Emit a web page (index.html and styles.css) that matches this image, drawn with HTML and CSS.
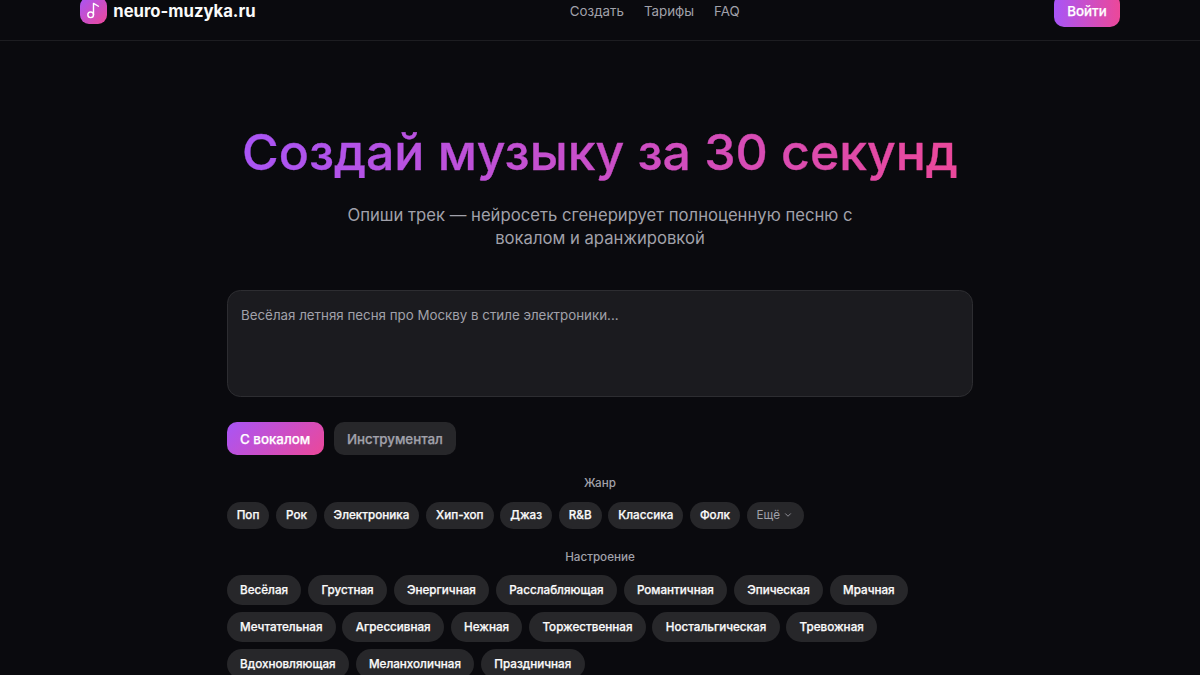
FILE: index.html
```html
<!DOCTYPE html>
<html lang="ru">
<head>
    <meta charset="UTF-8">
    <meta name="viewport" content="width=device-width, initial-scale=1.0">
    <title>neuro-muzyka.ru</title>
    <link rel="stylesheet" href="styles.css">
</head>
<body>
    <header class="header">
        <div class="header-inner">
            <a href="#" class="logo">
                <span class="logo-icon">
                    <svg viewBox="0 0 24 24" width="17" height="17" fill="none" stroke="#fff" stroke-width="2" stroke-linecap="round" stroke-linejoin="round">
                        <circle cx="8" cy="18" r="4"/>
                        <path d="M12 18V2l7 4"/>
                    </svg>
                </span>
                <span class="logo-text">neuro-muzyka.ru</span>
            </a>
            <nav class="nav">
                <a href="#">Создать</a>
                <a href="#">Тарифы</a>
                <a href="#">FAQ</a>
            </nav>
            <button class="login">Войти</button>
        </div>
    </header>

    <main class="main">
        <h1 class="title">Создай музыку за 30 секунд</h1>
        <p class="subtitle">Опиши трек — нейросеть сгенерирует полноценную песню с вокалом и аранжировкой</p>

        <textarea class="prompt" placeholder="Весёлая летняя песня про Москву в стиле электроники..."></textarea>

        <div class="modes">
            <button class="mode active">С вокалом</button>
            <button class="mode">Инструментал</button>
        </div>

        <div class="label">Жанр</div>
        <div class="chips genres">
            <button class="chip">Поп</button>
            <button class="chip">Рок</button>
            <button class="chip">Электроника</button>
            <button class="chip">Хип-хоп</button>
            <button class="chip">Джаз</button>
            <button class="chip">R&amp;B</button>
            <button class="chip">Классика</button>
            <button class="chip">Фолк</button>
            <button class="chip more">Ещё
                <svg viewBox="0 0 24 24" width="10" height="10" fill="none" stroke="currentColor" stroke-width="2" stroke-linecap="round" stroke-linejoin="round">
                    <path d="m6 9 6 6 6-6"/>
                </svg>
            </button>
        </div>

        <div class="label">Настроение</div>
        <div class="chips moods">
            <button class="chip">Весёлая</button>
            <button class="chip">Грустная</button>
            <button class="chip">Энергичная</button>
            <button class="chip">Расслабляющая</button>
            <button class="chip">Романтичная</button>
            <button class="chip">Эпическая</button>
            <button class="chip">Мрачная</button>
            <button class="chip">Мечтательная</button>
            <button class="chip">Агрессивная</button>
            <button class="chip">Нежная</button>
            <button class="chip">Торжественная</button>
            <button class="chip">Ностальгическая</button>
            <button class="chip">Тревожная</button>
            <button class="chip">Вдохновляющая</button>
            <button class="chip">Меланхоличная</button>
            <button class="chip">Праздничная</button>
        </div>
    </main>
</body>
</html>
```
FILE: styles.css
```css
*{
    margin: 0;
    padding: 0;
    box-sizing: border-box;
}
body{
    background-color: #0a0a0e;
    color: #fafafa;
    font-family: Inter, "Liberation Sans", sans-serif;
    height: 675px;
    overflow: hidden;
}
a{
    color: inherit;
    text-decoration: none;
}
button{
    border: none;
    font-family: inherit;
    color: inherit;
    white-space: nowrap;
    -webkit-text-stroke: 0.25px currentColor;
}
.header{
    display: flow-root;
    height: 41px;
    border-bottom: 1px solid #1d1d21;
}
.header-inner{
    width: 1040px;
    height: 60px;
    margin: -19.4px auto 0;
    display: flex;
    justify-content: space-between;
    align-items: center;
}
.logo{
    display: flex;
    align-items: center;
    gap: 6.67px;
}
.logo-icon{
    width: 26.67px;
    height: 26.67px;
    border-radius: 9px;
    background: linear-gradient(135deg, #a855f7, #ec4899);
    display: flex;
    align-items: center;
    justify-content: center;
}
.logo-text{
    font-size: 16.67px;
    font-weight: 700;
}
.nav{
    display: flex;
    gap: 20px;
    font-size: 13.33px;
    color: #a1a1aa;
}
.login{
    height: 33.33px;
    padding: 0 13.33px;
    border-radius: 10px;
    font-size: 13.33px;
    font-weight: 500;
    color: #fff;
    background: linear-gradient(90deg, #a855f7, #ec4899);
}
.main{
    width: 746.67px;
    margin: 0 auto;
    padding-top: 84.6px;
}
.title{
    font-size: 50px;
    line-height: 52px;
    font-weight: 500;
    letter-spacing: -0.04px;
    padding-bottom: 6px;
    text-align: center;
    color: transparent;
    -webkit-text-stroke: 0.4px transparent;
    background: linear-gradient(90deg, #a855f7, #ec4899);
    -webkit-background-clip: text;
    background-clip: text;
}
.subtitle{
    width: 560px;
    margin: 20.5px auto 39.5px;
    font-size: 16.67px;
    line-height: 23.33px;
    text-align: center;
    color: #a1a1aa;
}
.prompt{
    display: block;
    width: 100%;
    height: 106.67px;
    padding: 13.33px;
    border: 1px solid #2d2d31;
    border-radius: 13.33px;
    background-color: #1b1b1f;
    color: #fafafa;
    font-family: inherit;
    font-size: 13.33px;
    line-height: 20px;
    resize: none;
}
.prompt::placeholder{
    color: #a1a1aa;
}
.modes{
    display: flex;
    gap: 10px;
    margin-top: 25px;
}
.mode{
    height: 33.33px;
    padding: 0 13.33px;
    border-radius: 10px;
    font-size: 13.33px;
    font-weight: 500;
    color: #a1a1aa;
    background-color: #27272a;
}
.mode.active{
    color: #fff;
    background: linear-gradient(135deg, #a855f7, #ec4899);
}
.label{
    margin-top: 20px;
    font-size: 11.67px;
    line-height: 16.67px;
    font-weight: 500;
    text-align: center;
    color: #a1a1aa;
}
.chips{
    display: flex;
    flex-wrap: wrap;
    gap: 6.67px;
    margin-top: 10px;
}
.chip{
    height: 30px;
    padding: 0 13.33px;
    border-radius: 15px;
    font-size: 11.67px;
    font-weight: 500;
    background-color: #27272a;
}
.genres .chip{
    height: 26.67px;
    padding: 0 10px;
}
.genres .chip.more{
    display: flex;
    align-items: center;
    gap: 3.33px;
    padding-right: 10.5px;
    font-weight: 400;
    color: #a1a1aa;
    -webkit-text-stroke: 0;
}
```
